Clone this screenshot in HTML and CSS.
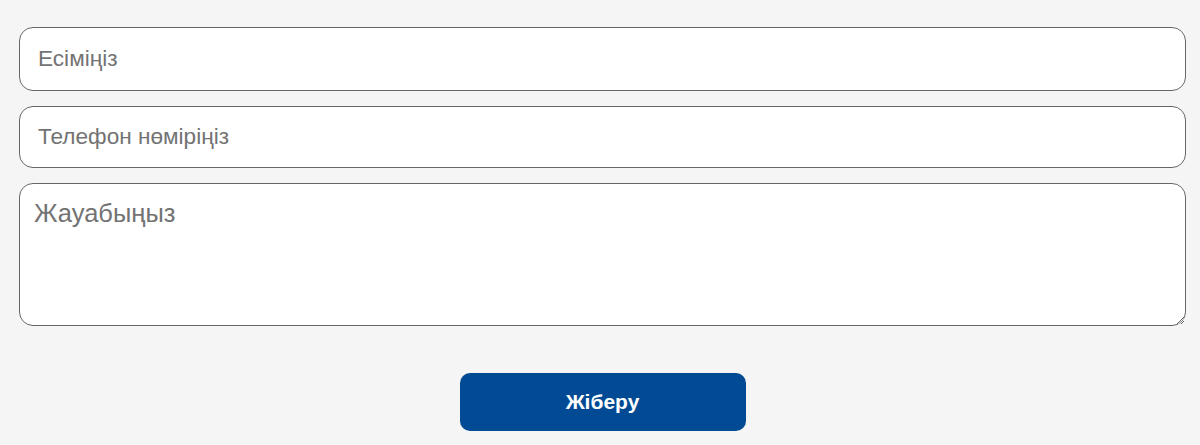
FILE: index.html
```html
<!DOCTYPE html>
<html lang="kk">
<head>
<meta charset="utf-8">
<title>Форма</title>
<link rel="stylesheet" href="styles.css">
</head>
<body>
<form class="form">
  <input class="field" type="text" placeholder="Есіміңіз">
  <input class="field field-short" type="tel" placeholder="Телефон нөміріңіз">
  <textarea class="field area" placeholder="Жауабыңыз"></textarea>
  <div class="actions">
    <button class="submit" type="button">Жіберу</button>
  </div>
</form>
</body>
</html>
```
FILE: styles.css
```css
html, body {
  margin: 0;
  padding: 0;
  background: #f5f5f5;
  font-family: "Liberation Sans", Arial, sans-serif;
}
.form {
  display: flex;
  flex-direction: column;
  gap: 15px;
  padding: 27px 14px 0 19px;
}
.field {
  box-sizing: border-box;
  width: 100%;
  height: 64px;
  margin: 0;
  border: 1px solid #676767;
  border-radius: 14px;
  background: #fff;
  padding: 0 18px;
  font-family: "Liberation Sans", Arial, sans-serif;
  font-size: 22.6px;
  color: #333;
  outline: none;
}
.field-short {
  height: 62px;
}
.field::placeholder {
  color: #737373;
  opacity: 1;
}
.area {
  height: 143px;
  padding: 14.5px 14px 12px;
  font-size: 25.5px;
  resize: vertical;
}
.actions {
  display: flex;
  justify-content: center;
  padding-top: 32px;
}
.submit {
  width: 286px;
  height: 58px;
  border: none;
  border-radius: 10px;
  background: #024b94;
  color: #fff;
  font-family: "Liberation Sans", Arial, sans-serif;
  font-weight: bold;
  font-size: 21px;
  cursor: pointer;
}
```
